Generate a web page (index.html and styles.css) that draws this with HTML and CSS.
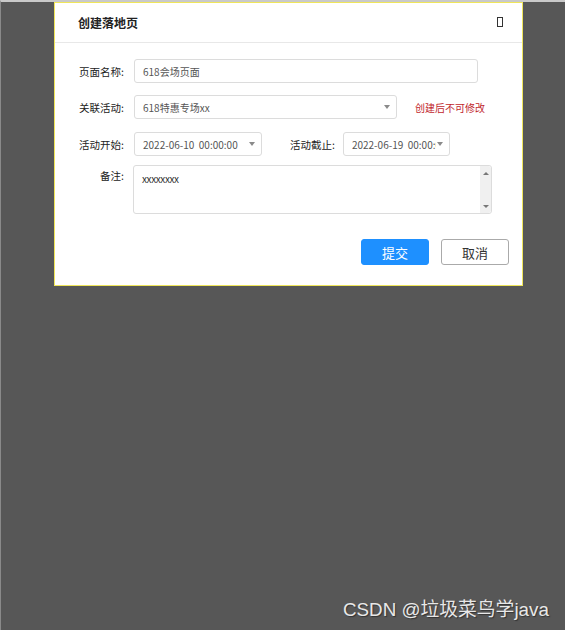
FILE: index.html
```html
<!DOCTYPE html>
<html lang="zh">
<head>
<meta charset="utf-8">
<title>创建落地页</title>
<link rel="stylesheet" href="styles.css">
</head>
<body>
<div class="page">
  <div class="dialog">
    <div class="dlg-head">
      <span class="dlg-title">创建落地页</span>
      <span class="dlg-close"></span>
    </div>
    <div class="dlg-body">
      <div class="row r1">
        <label class="lbl">页面名称:</label>
        <div class="field input w-name">618会场页面</div>
      </div>
      <div class="row r2">
        <label class="lbl">关联活动:</label>
        <div class="field select w-act"><span class="val">618特惠专场xx</span><span class="caret"></span></div>
        <span class="warn">创建后不可修改</span>
      </div>
      <div class="row r3">
        <label class="lbl">活动开始:</label>
        <div class="field select w-start"><span class="val">2022-06-10&nbsp;&nbsp;00:00:00</span><span class="caret"></span></div>
        <label class="lbl2">活动截止:</label>
        <div class="field select w-end"><span class="val clip">2022-06-19&nbsp;&nbsp;00:00:00</span><span class="caret"></span></div>
      </div>
      <div class="row r4">
        <label class="lbl">备注:</label>
        <div class="field area">
          <span class="area-text">xxxxxxxx</span>
          <div class="sbar"><span class="sb-up"></span><span class="sb-down"></span></div>
        </div>
      </div>
      <div class="actions">
        <button class="btn primary">提交</button>
        <button class="btn plain">取消</button>
      </div>
    </div>
  </div>
  <div class="watermark">CSDN @垃圾菜鸟学java</div>
</div>
</body>
</html>
```

FILE: styles.css
```css
html, body {
  margin: 0;
  padding: 0;
  height: 100%;
}
body {
  background: #575757;
  font-family: "Noto Sans CJK SC", "Liberation Sans", sans-serif;
  color: #333;
}
.page {
  position: relative;
  height: 628px;
  border-top: 2px solid #c9c9c9;
  border-left: 1px solid #8a8a8a;
}
.dialog {
  margin-left: 53px;
  width: 469px;
  box-sizing: border-box;
  background: #fff;
  border: 1px solid #efe55a;
  height: 284px;
}
.dlg-head {
  height: 39px;
  border-bottom: 1px solid #e8e8e8;
  display: flex;
  align-items: center;
  justify-content: space-between;
  padding: 0 19px 0 23px;
}
.dlg-title {
  font-size: 12px;
  font-weight: bold;
  color: #222;
}
.dlg-close {
  width: 4px;
  height: 8px;
  border: 1px solid #333;
  margin-top: -2px;
}
.dlg-body {
  padding-top: 16px;
}
.row {
  display: flex;
  align-items: center;
}
.r2 { margin-top: 12px; }
.r3 { margin-top: 13px; }
.r4 { margin-top: 9px; align-items: flex-start; }
.lbl {
  width: 69px;
  text-align: right;
  font-size: 10.5px;
  color: #222;
  margin-right: 10px;
}
.r4 .lbl { margin-top: 3px; margin-right: 9px; }
.lbl2 {
  font-size: 10.5px;
  color: #222;
  margin-left: 28px;
  margin-right: 8px;
}
.field {
  box-sizing: border-box;
  border: 1px solid #dcdcdc;
  border-radius: 3px;
  height: 24px;
  font-size: 10px;
  color: #555;
  display: flex;
  align-items: center;
  padding-left: 8px;
}
.w-name { width: 344px; }
.w-act { width: 263px; }
.w-start { width: 128px; }
.w-end { width: 107px; }
.select {
  justify-content: space-between;
  padding-right: 6px;
}
.val {
  white-space: nowrap;
  overflow: hidden;
}
.clip { width: 84px; }
.caret {
  width: 0;
  height: 0;
  border-left: 3.5px solid transparent;
  border-right: 3.5px solid transparent;
  border-top: 4px solid #8a8a8a;
  flex: none;
}
.warn {
  font-size: 10px;
  color: #c1272d;
  margin-left: 18px;
}
.area {
  width: 359px;
  height: 49px;
  align-items: flex-start;
  justify-content: space-between;
  padding-left: 8px;
  padding-right: 0;
  color: #333;
}
.area-text {
  margin-top: 5px;
  letter-spacing: -0.4px;
}
.sbar {
  width: 11px;
  height: 100%;
  background: #f0f0f0;
  display: flex;
  flex-direction: column;
  justify-content: space-between;
  align-items: center;
  padding: 6px 0 5px;
  box-sizing: border-box;
  border-radius: 0 3px 3px 0;
}
.sb-up {
  width: 0; height: 0;
  border-left: 3px solid transparent;
  border-right: 3px solid transparent;
  border-bottom: 3px solid #777;
}
.sb-down {
  width: 0; height: 0;
  border-left: 3px solid transparent;
  border-right: 3px solid transparent;
  border-top: 3px solid #777;
}
.actions {
  display: flex;
  justify-content: flex-end;
  gap: 12px;
  margin-top: 25px;
  padding-right: 13px;
}
.btn {
  width: 68px;
  height: 26px;
  border-radius: 3px;
  font-family: "Noto Sans CJK SC", sans-serif;
  font-size: 13px;
  padding: 0;
  cursor: pointer;
}
.primary {
  background: #1e90ff;
  border: 1px solid #1e90ff;
  color: #fff;
}
.plain {
  background: #fff;
  border: 1px solid #aaa;
  color: #333;
}
.watermark {
  position: absolute;
  left: 342px;
  top: 592px;
  font-family: "Liberation Sans", "Noto Sans CJK SC", sans-serif;
  font-size: 18.8px;
  color: #e8e8e8;
  text-shadow: 1px 1px 1px #333;
  white-space: nowrap;
}
```
